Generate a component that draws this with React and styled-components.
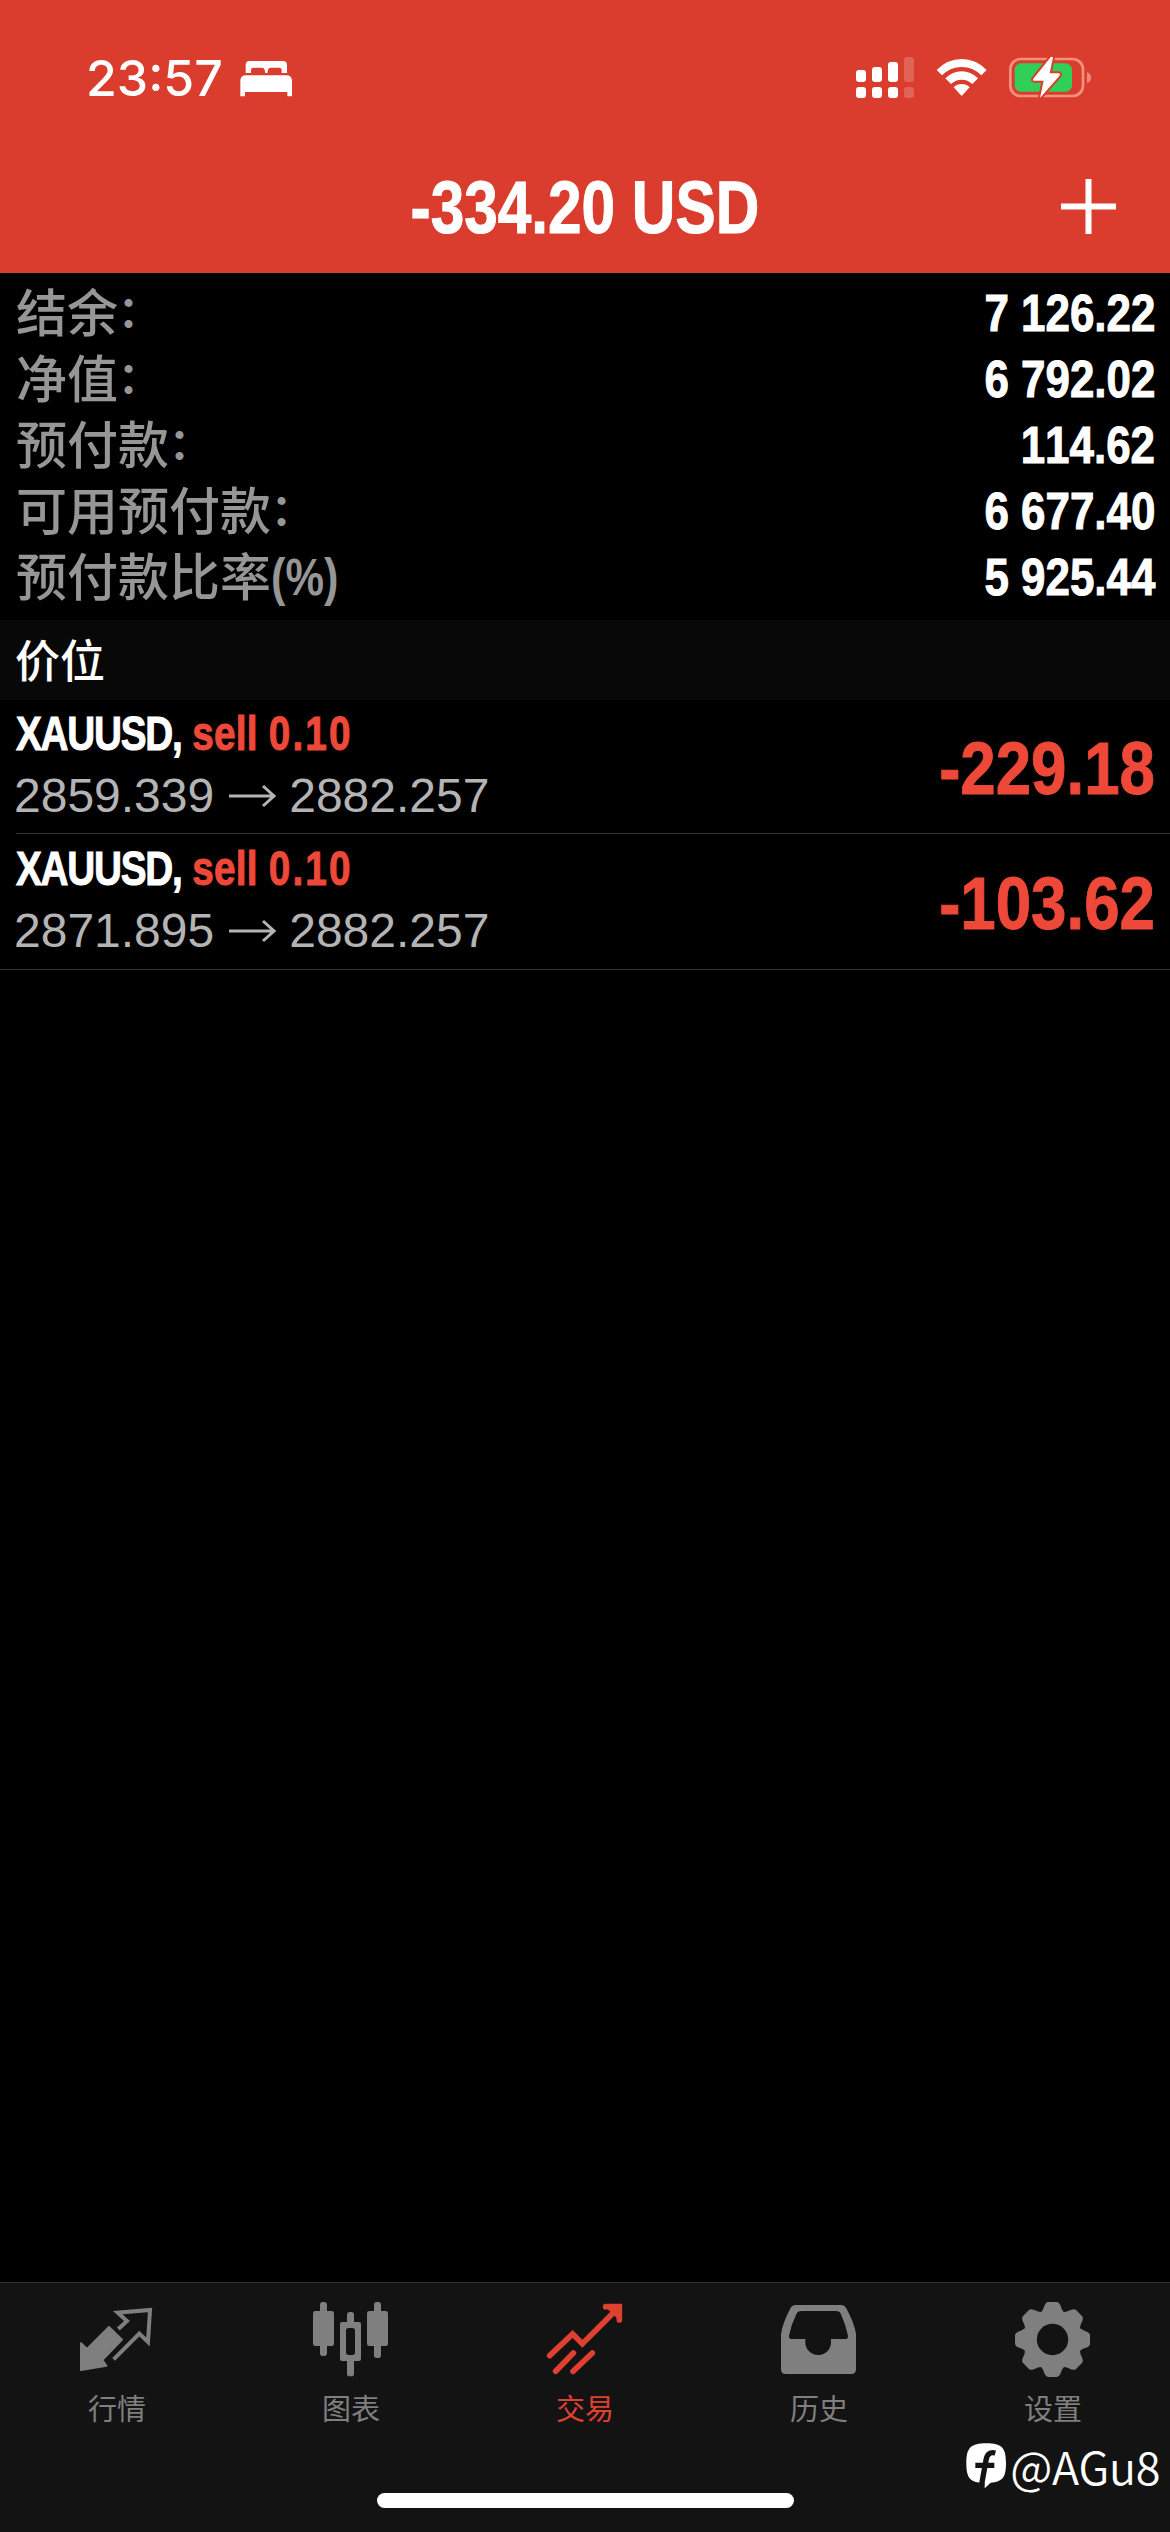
import React from "react";
import styled, { createGlobalStyle } from "styled-components";

const GlobalStyle = createGlobalStyle`
    * {
        box-sizing: border-box;
    }

    body {
        margin: 0;
        background-color: #000;
    }
`;

const Screen = styled.div`
    display: flex;
    flex-direction: column;
    position: relative;
    width: 1170px;
    height: 2532px;
    overflow: hidden;
    background-color: #000;
    color: #fff;
    font-family: "Liberation Sans", "Noto Sans CJK SC", sans-serif;
    font-kerning: none;
`;

const Header = styled.header`
    height: 273px;
    background-color: #da3c2d;
`;

const StatusBar = styled.div`
    height: 142px;
    display: flex;
    align-items: flex-start;
    padding: 56px 79px 0 86px;
`;

const Clock = styled.span`
    width: 154px;
    margin-top: -5px;
    font-family: "Inter", sans-serif;
    font-size: 50px;
    font-weight: 550;
    line-height: 54px;
    white-space: nowrap;
`;

const StatusIcons = styled.div`
    display: flex;
    margin-left: auto;
    gap: 22px;
`;

const TitleRow = styled.div`
    height: 131px;
    display: grid;
    grid-template-columns: 1fr auto 1fr;
    align-items: center;
    padding: 0 54px 0 52px;
`;

const Condensed = styled.span`
    display: inline-block;
    font-weight: 700;
    font-size: ${(props) => props.$size}px;
    line-height: ${(props) => props.$line}px;
    transform: scaleX(${(props) => props.$scale});
    transform-origin: ${(props) => props.$origin || "left"} center;
    white-space: pre;
    -webkit-text-stroke: 1px currentColor;
`;

const Title = styled(Condensed)`
    grid-column: 2;
    margin-right: -2px;
`;

const AddButton = styled.button`
    grid-column: 3;
    justify-self: end;
    display: flex;
    margin-bottom: 3px;
    padding: 0;
    border: 0;
    background: none;
    color: #fff;
`;

const Summary = styled.section`
    height: 347px;
    padding: 7px 15px 10px 16px;
`;

const SummaryRow = styled.div`
    height: 66px;
    display: flex;
    justify-content: space-between;
    align-items: flex-start;
`;

const SummaryLabel = styled.span`
    display: flex;
    margin-top: -3px;
    font-family: "Noto Sans CJK SC", sans-serif;
    font-size: 51px;
    font-weight: 500;
    line-height: 66px;
    color: #969696;
`;

const Colon = styled.span`
    margin-top: -1px;
    font-size: 42px;
    font-weight: 700;
`;

const Percent = styled(Condensed)`
    margin-top: 4px;
    font-family: "Liberation Sans", sans-serif;
    -webkit-text-stroke: 0;
`;

const SectionTitle = styled.h2`
    height: 80px;
    margin: 0;
    padding-left: 15px;
    background-color: #080808;
    font-family: "Noto Sans CJK SC", sans-serif;
    font-size: 45px;
    font-weight: 500;
    line-height: 78px;
`;

const Position = styled.article`
    height: ${(props) => (props.$last ? 136 : 134)}px;
    display: flex;
    justify-content: space-between;
    margin-left: ${(props) => (props.$last ? 0 : 16)}px;
    padding: ${(props) => (props.$last ? 6 : 5)}px 15px 0 ${(props) => (props.$last ? 16 : 0)}px;
    border-bottom: 1px solid #363636;
`;

const PositionInfo = styled.div`
    display: flex;
    flex-direction: column;
    align-items: flex-start;
`;

const SymbolName = styled.span`
    letter-spacing: -1.6px;
`;

const Side = styled.span`
    color: #ee4938;
    letter-spacing: ${(props) => props.$spacing || 0}px;
`;

const Prices = styled.div`
    display: flex;
    align-items: center;
    margin: 2px 0 0 -2px;
    font-size: 48px;
    line-height: 66px;
    color: #b4b4b4;

    svg {
        margin: 0 13px 0 15px;
    }
`;

const Profit = styled(Condensed)`
    color: #ee4938;
`;

const TabBar = styled.nav`
    height: 250px;
    display: grid;
    grid-template-columns: repeat(5, 1fr);
    margin-top: auto;
    padding-top: 17px;
    border-top: 1px solid #333;
    background-color: #131313;
`;

const Tab = styled.a`
    display: flex;
    flex-direction: column;
    align-items: center;
    color: ${(props) => (props.$active ? "#e0402f" : "#7f7f7f")};
`;

const TabLabel = styled.span`
    margin-top: 7px;
    font-family: "Noto Sans CJK SC", sans-serif;
    font-size: 29px;
    line-height: 44px;
`;

const HomeIndicator = styled.div`
    position: absolute;
    left: 377px;
    bottom: 24px;
    width: 417px;
    height: 15px;
    border-radius: 8px;
    background-color: #fff;
`;

const Watermark = styled.div`
    position: absolute;
    right: 10px;
    bottom: 36px;
    display: flex;
    align-items: center;
    gap: 3px;
    font-family: "Noto Sans CJK SC", sans-serif;
    font-size: 45px;
    font-weight: 350;
    line-height: 60px;
    letter-spacing: -0.4px;
`;

const BedIcon = () => (
    <svg width="53" height="38" viewBox="539 56 159 114" fill="currentColor">
        <path d="M556 98V74q0-12 12-12h100q12 0 12 12v24h-16v-9q0-7-7-7h-26q-7 0-8 7l-2 9h-6l-2-9q-1-7-8-7h-26q-7 0-7 7v9z" />
        <path d="M540 168v-46q0-17 17-17h121q17 0 17 17v46h-14v-13H554v13z" />
    </svg>
);

const BedSlot = styled.span`
    display: flex;
    padding-top: 3px;
`;

const SignalIcon = () => (
    <svg width="58" height="42" viewBox="48 48 174 126" fill="currentColor">
        <rect x="48" y="90" width="30" height="36" rx="9" />
        <rect x="96" y="81" width="30" height="45" rx="9" />
        <rect x="144" y="66" width="30" height="60" rx="9" />
        <rect x="48" y="141" width="30" height="33" rx="9" />
        <rect x="96" y="141" width="30" height="33" rx="9" />
        <rect x="144" y="141" width="30" height="33" rx="9" />
        <g opacity="0.2">
            <rect x="192" y="51" width="30" height="75" rx="9" />
            <rect x="192" y="141" width="30" height="33" rx="9" />
        </g>
    </svg>
);

const WifiIcon = () => (
    <svg width="51" height="42" viewBox="288 48 153 126" fill="currentColor">
        <path d="M290 90Q322 57 365 57Q408 57 440 90L424 106Q399 81 365 81Q331 81 306 106Z" />
        <path d="M316 115Q338 94 365 94Q392 94 414 115L397 132Q383 119 365 119Q347 119 333 132Z" />
        <path d="M341 142Q351 132 365 132Q379 132 389 142L365 168Z" />
    </svg>
);

const BatteryIcon = () => (
    <svg width="82" height="42" viewBox="507 48 246 126">
        <rect x="511" y="57" width="218" height="111" rx="31" fill="none" stroke="#f4907f" strokeWidth="8" />
        <path d="M741 97q12 4 12 16t-12 16z" fill="#ec8a7e" />
        <rect x="524" y="70" width="172" height="85" rx="19" fill="#30cf57" />
        <path
            d="M633 50L580 116Q577 122 583 122H611L600 174L658 108Q663 100 656 100H629L639 52Z"
            fill="#fff"
            stroke="#da3c2d"
            strokeWidth="12"
            strokeLinejoin="round"
            paintOrder="stroke"
        />
    </svg>
);

const PlusIcon = () => (
    <svg width="55" height="55" viewBox="0 0 55 55" stroke="currentColor" strokeWidth="6">
        <path d="M27.5 0V55M0 27.5H55" />
    </svg>
);

const ArrowIcon = () => (
    <svg width="47" height="24" viewBox="0 0 47 24" fill="none" stroke="currentColor" strokeWidth="3">
        <path d="M0 12H45M34 2L45 12L34 22" />
    </svg>
);

const QuotesIcon = () => (
    <svg width="78" height="78" viewBox="234 90 234 234">
        <path
            d="M243 220L261 237L327 171L366 209L307 270L319 287L243 300Z"
            fill="currentColor"
            stroke="currentColor"
            strokeWidth="6"
            strokeLinejoin="round"
        />
        <path
            d="M355 177L381 153L353 128L450 120L444 216L418 191L341 268"
            fill="none"
            stroke="currentColor"
            strokeWidth="12"
        />
    </svg>
);

const ChartIcon = () => (
    <svg width="78" height="78" viewBox="936 90 234 234" fill="currentColor">
        <rect x="939" y="123" width="63" height="105" rx="7" />
        <rect x="960" y="96" width="21" height="162" rx="8" />
        <rect x="1101" y="123" width="63" height="105" rx="7" />
        <rect x="1122" y="96" width="21" height="168" rx="8" />
        <rect x="1041" y="126" width="21" height="40" rx="8" />
        <rect x="1041" y="262" width="21" height="57" rx="8" />
        <path
            fillRule="evenodd"
            d="M1026 156h51q6 0 6 6v105q0 6-6 6h-51q-6 0-6-6v-105q0-6 6-6zM1046 174q-8 0-8 8v65q0 8 8 8h11q8 0 8-8v-65q0-8-8-8z"
        />
    </svg>
);

const TradeIcon = () => (
    <svg
        width="78"
        height="78"
        viewBox="138 90 234 234"
        fill="none"
        stroke="currentColor"
        strokeWidth="17"
        strokeLinecap="round"
    >
        <path d="M149 257L218 192L247 221L352 116" strokeLinejoin="miter" />
        <path d="M317 110H358V150" />
        <path d="M326 116H356V146Z" fill="currentColor" strokeWidth="6" />
        <path d="M167 304L220 249M219 304L277 249" />
    </svg>
);

const HistoryIcon = () => (
    <svg width="78" height="78" viewBox="840 90 234 234" fill="currentColor">
        <path
            fillRule="evenodd"
            d="M886 105H1024Q1034 105 1038 113Q1064 160 1068 193V298Q1068 312 1054 312H857Q843 312 843 298V193Q847 160 872 113Q876 105 886 105ZM904 123Q893 123 889 133Q873 165 867 197Q866 207 876 207H916V218C916 237 933 255 955 255C977 255 993 237 993 218V207H1035Q1045 207 1044 197Q1037 165 1023 133Q1019 123 1008 123Z"
        />
    </svg>
);

const SettingsIcon = () => (
    <svg width="78" height="78" viewBox="282 90 234 234">
        <g fill="currentColor">
            {[0, 45, 90, 135, 180, 225, 270, 315].map((angle) => (
                <path
                    key={angle}
                    d="M355 132Q366 127 371 113Q376 96 385 96H410Q419 96 424 113Q429 127 440 132L398 209Z"
                    transform={`rotate(${angle} 397.5 208.5)`}
                />
            ))}
            <circle cx="397.5" cy="208.5" r="86" />
        </g>
        <circle cx="397.5" cy="208.5" r="47" fill="#131313" />
    </svg>
);

const WatermarkIcon = () => (
    <svg width="41" height="46" viewBox="136 536 123 138">
        <path
            d="M197 537C243 537 256 550 256 596C256 640 246 652 210 655L192 672V656C148 655 137 642 137 596C137 550 151 537 197 537Z"
            fill="#fff"
        />
        <path
            d="M224 566Q200 560 196 588L183 660M164 603H221"
            fill="none"
            stroke="#131313"
            strokeWidth="16"
        />
    </svg>
);

const summary = [
    { label: "结余", suffix: "：", value: "7 126.22" },
    { label: "净值", suffix: "：", value: "6 792.02" },
    { label: "预付款", suffix: "：", value: "114.62" },
    { label: "可用预付款", suffix: "：", value: "6 677.40" },
    { label: "预付款比率", suffix: "(%)", value: "5 925.44" },
];

const positions = [
    { symbol: "XAUUSD", side: "sell", volume: "0.10", open: "2859.339", current: "2882.257", profit: "-229.18" },
    { symbol: "XAUUSD", side: "sell", volume: "0.10", open: "2871.895", current: "2882.257", profit: "-103.62" },
];

const tabs = [
    { label: "行情", Icon: QuotesIcon },
    { label: "图表", Icon: ChartIcon },
    { label: "交易", Icon: TradeIcon, active: true },
    { label: "历史", Icon: HistoryIcon },
    { label: "设置", Icon: SettingsIcon },
];

export default function App() {
    return (
        <Screen>
            <GlobalStyle />
            <Header>
                <StatusBar>
                    <Clock>23:57</Clock>
                    <BedSlot>
                        <BedIcon />
                    </BedSlot>
                    <StatusIcons>
                        <SignalIcon />
                        <WifiIcon />
                        <BatteryIcon />
                    </StatusIcons>
                </StatusBar>
                <TitleRow>
                    <Title $size={74} $line={80} $scale={0.815} $origin="center">
                        -334.20 USD
                    </Title>
                    <AddButton>
                        <PlusIcon />
                    </AddButton>
                </TitleRow>
            </Header>

            <Summary>
                {summary.map((item) => (
                    <SummaryRow key={item.label}>
                        <SummaryLabel>
                            {item.label}
                            {item.suffix === "(%)" ? (
                                <Percent $size={51} $line={66} $scale={0.85}>
                                    {item.suffix}
                                </Percent>
                            ) : (
                                <Colon>{item.suffix}</Colon>
                            )}
                        </SummaryLabel>
                        <Condensed $size={52} $line={66} $scale={0.845} $origin="right">
                            {item.value}
                        </Condensed>
                    </SummaryRow>
                ))}
            </Summary>

            <SectionTitle>价位</SectionTitle>
            {positions.map((item, i) => (
                <Position key={item.open} $last={i === positions.length - 1}>
                    <PositionInfo>
                        <Condensed $size={49} $line={56} $scale={0.79}>
                            <SymbolName>{item.symbol},</SymbolName>{" "}
                            <Side $spacing={0.3}>{item.side} </Side>
                            <Side $spacing={2.8}>{item.volume}</Side>
                        </Condensed>
                        <Prices>
                            {item.open}
                            <ArrowIcon />
                            {item.current}
                        </Prices>
                    </PositionInfo>
                    <Profit $size={74} $line={127} $scale={0.86} $origin="right">
                        {item.profit}
                    </Profit>
                </Position>
            ))}

            <TabBar>
                {tabs.map(({ label, Icon, active }) => (
                    <Tab key={label} $active={active}>
                        <Icon />
                        <TabLabel>{label}</TabLabel>
                    </Tab>
                ))}
            </TabBar>
            <HomeIndicator />
            <Watermark>
                <WatermarkIcon />
                <span>@AGu8</span>
            </Watermark>
        </Screen>
    );
}
